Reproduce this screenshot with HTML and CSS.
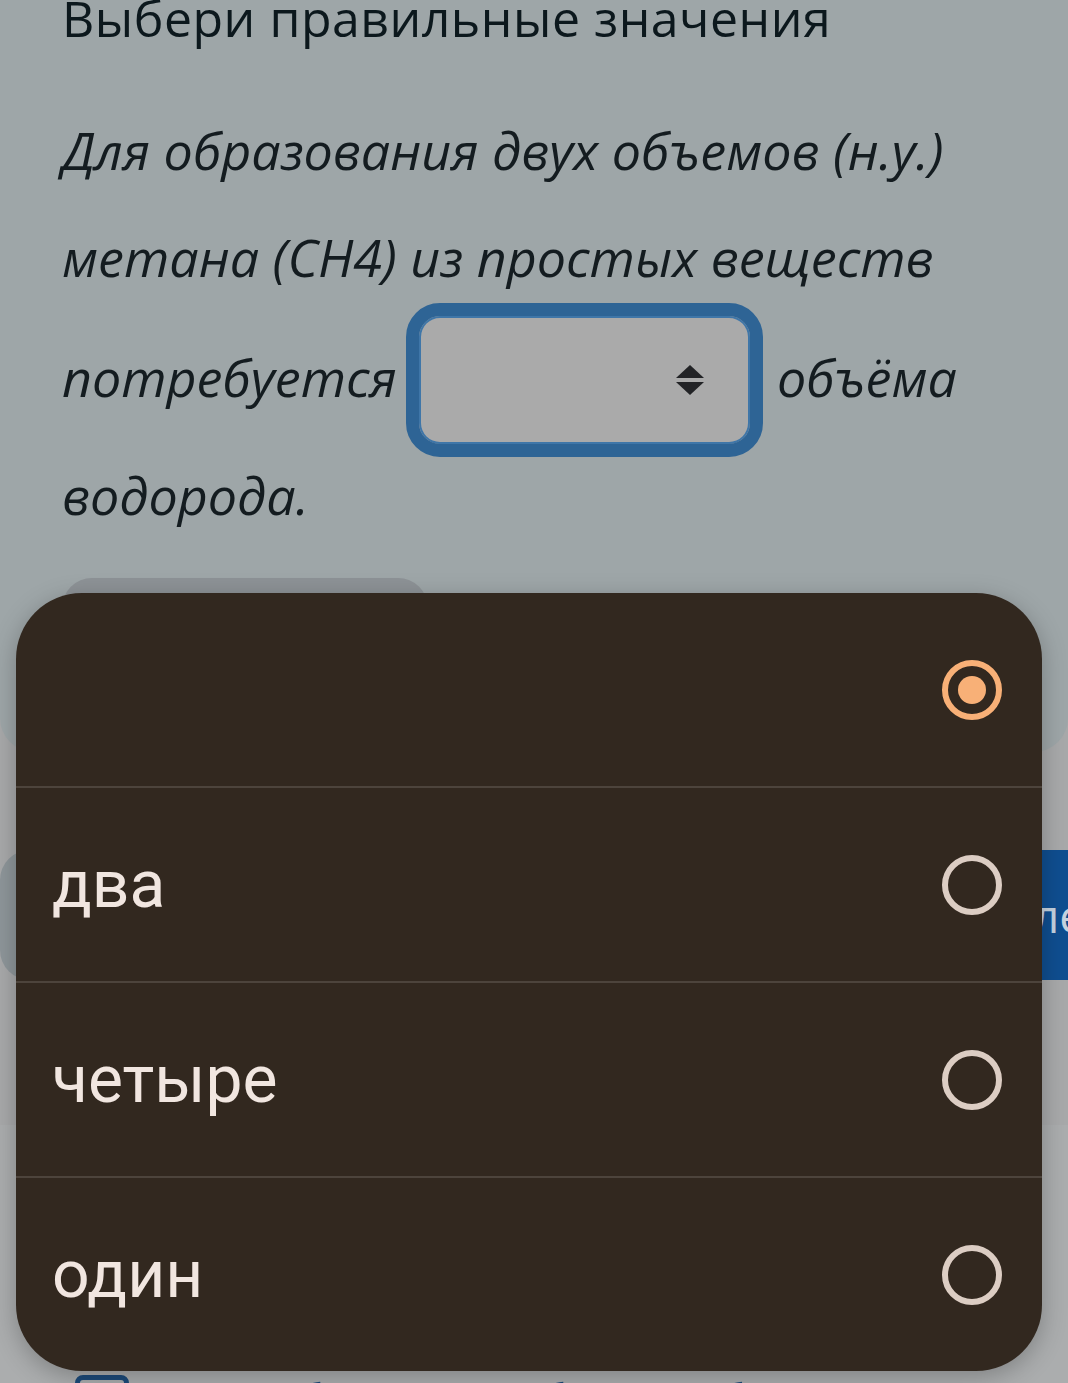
FILE: index.html
```html
<!DOCTYPE html>
<html lang="ru">
<head>
    <meta charset="UTF-8">
    <meta name="viewport" content="width=device-width, initial-scale=1.0">
    <title>Задание</title>
    <link rel="stylesheet" href="styles.css">
</head>
<body>
    <!-- Task card -->
    <div class="task-card">
        <h2 class="task-title">Выбери правильные значения</h2>
        <p class="task-text">
            Для образования двух объемов (н.у.) метана (CH4) из простых веществ потребуется
            <span class="select-box"><span class="select-arrows"></span></span>
            объёма водорода.
        </p>
        <button class="hint-button">Подсказка</button>
    </div>

    <!-- Actions -->
    <div class="actions">
        <button class="btn btn-grey">Пропустить</button>
        <button class="btn btn-blue">Далее</button>
    </div>

    <div class="report-panel">
        <div class="report-row">
            <span class="report-check"></span>
            <span class="report-text">Сообщить об ошибке</span>
        </div>
    </div>

    <!-- Option picker -->
    <div class="picker">
        <div class="picker-row">
            <span class="picker-label"></span>
            <span class="radio radio-on"></span>
        </div>
        <div class="picker-row">
            <span class="picker-label">два</span>
            <span class="radio"></span>
        </div>
        <div class="picker-row">
            <span class="picker-label">четыре</span>
            <span class="radio"></span>
        </div>
        <div class="picker-row">
            <span class="picker-label">один</span>
            <span class="radio"></span>
        </div>
    </div>
</body>
</html>
```

FILE: styles.css
```css
body {
    margin: 0;
    padding: 0;
    background-color: #a8a9aa;
    font-family: "Open Sans", sans-serif;
    overflow: hidden;
    height: 1383px;
    position: relative;
}

.task-card {
    background-color: #9ea6a8;
    border-radius: 0 0 34px 34px;
    padding: 0 40px 0 62px;
    height: 752px;
    box-sizing: border-box;
    overflow: hidden;
}
.task-title {
    margin: -14px 0 0;
    font-size: 50px;
    font-weight: 400;
    letter-spacing: 0.5px;
    line-height: 64px;
    color: #0c181d;
}
.task-text {
    margin: 46px 0 0;
    font-size: 52px;
    font-style: italic;
    line-height: 107px;
    color: #141c20;
}
/* closed dropdown with focus ring */
.select-box {
    display: inline-block;
    vertical-align: -44px;
    position: relative;
    width: 331px;
    height: 128px;
    margin: -7px 0 -16px -4px;
    border: 13px solid #2e6495;
    border-radius: 34px;
    background-color: #aaaaaa;
    box-shadow: inset 0 0 0 2px #3f76a8;
}
.select-arrows {
    position: absolute;
    right: 46px;
    top: 44px;
    width: 28px;
    height: 40px;
}
.select-arrows::before,
.select-arrows::after {
    content: "";
    position: absolute;
    left: 0;
    border-left: 14px solid transparent;
    border-right: 14px solid transparent;
}
.select-arrows::before {
    top: 5px;
    border-bottom: 13px solid #222326;
}
.select-arrows::after {
    top: 22px;
    border-top: 13px solid #222326;
}
.hint-button {
    display: block;
    margin-top: 30px;
    width: 366px;
    height: 120px;
    border: none;
    border-radius: 30px;
    background-color: #8d9296;
}

.actions {
    display: flex;
    justify-content: space-between;
    margin-top: 98px;
}
.btn {
    height: 130px;
    border: none;
    font-family: "Open Sans", sans-serif;
    font-size: 46px;
}
.btn-grey {
    width: 480px;
    border-radius: 30px;
    background-color: #8e969a;
    color: #2a3338;
}
.btn-blue {
    width: 520px;
    border-radius: 30px 0 0 30px;
    background-color: #0f4e90;
    color: #c5d3e0;
    text-align: left;
    padding-left: 428px;
    white-space: nowrap;
    overflow: hidden;
}

.report-panel {
    margin-top: 145px;
    background-color: #abadae;
    height: 260px;
    padding: 250px 0 0 75px;
}
.report-row {
    display: flex;
    align-items: flex-start;
    gap: 50px;
}
.report-check {
    width: 44px;
    height: 44px;
    border: 5px solid #1c4a7a;
    border-radius: 8px;
}
.report-text {
    font-size: 60px;
    line-height: 60px;
    color: #1c4a7a;
}

/* bottom sheet with the select options */
.picker {
    position: absolute;
    left: 16px;
    top: 593px;
    width: 1026px;
    border-radius: 66px;
    background-color: #32281f;
    box-shadow: 0 6px 24px rgba(0, 0, 0, 0.25);
    overflow: hidden;
}
.picker-row {
    display: flex;
    align-items: center;
    justify-content: space-between;
    height: 193px;
    padding: 0 40px 0 36px;
    border-top: 2px solid #4d443c;
}
.picker-row:first-child {
    border-top: none;
}
.picker-label {
    font-family: Roboto, sans-serif;
    font-size: 66px;
    color: #f1e6e0;
}
.radio {
    width: 48px;
    height: 48px;
    border: 6px solid #dccdc3;
    border-radius: 50%;
    position: relative;
}
.radio-on {
    border-color: #f8b077;
}
.radio-on::after {
    content: "";
    position: absolute;
    left: 10px;
    top: 10px;
    width: 28px;
    height: 28px;
    border-radius: 50%;
    background-color: #f8b077;
}
```
